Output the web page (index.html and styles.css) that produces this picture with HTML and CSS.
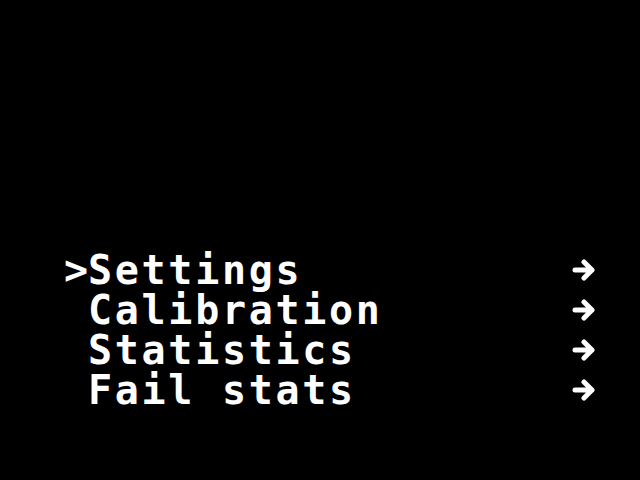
FILE: index.html
```html
<!DOCTYPE html>
<html>
<head>
<meta charset="utf-8">
<link rel="stylesheet" href="styles.css">
</head>
<body>
<div class="screen">
  <ul class="menu">
    <li class="row"><span class="cursor">&gt;</span><span class="label">Settings</span><svg class="arrow" viewBox="0 0 24 22"><path d="M3 11H20M12 3L20 11L12 19"/></svg></li>
    <li class="row"><span class="cursor"></span><span class="label">Calibration</span><svg class="arrow" viewBox="0 0 24 22"><path d="M3 11H20M12 3L20 11L12 19"/></svg></li>
    <li class="row"><span class="cursor"></span><span class="label">Statistics</span><svg class="arrow" viewBox="0 0 24 22"><path d="M3 11H20M12 3L20 11L12 19"/></svg></li>
    <li class="row"><span class="cursor"></span><span class="label">Fail stats</span><svg class="arrow" viewBox="0 0 24 22"><path d="M3 11H20M12 3L20 11L12 19"/></svg></li>
  </ul>
</div>
</body>
</html>
```
FILE: styles.css
```css
html, body {
  margin: 0;
  padding: 0;
  background: #000;
}
.screen {
  width: 640px;
  height: 480px;
  background: #000;
  color: #fff;
  box-sizing: border-box;
  padding: 250px 44px 0 64px;
}
.menu {
  list-style: none;
  margin: 0;
  padding: 0;
  display: flex;
  flex-direction: column;
}
.row {
  display: flex;
  align-items: center;
  height: 40px;
  font-family: "DejaVu Sans Mono", monospace;
  font-weight: bold;
  font-size: 40px;
  letter-spacing: 2.7px;
  line-height: 40px;
}
.cursor {
  width: 24px;
  flex: none;
}
.label {
  flex: 1;
}
.arrow {
  width: 24px;
  height: 22px;
  flex: none;
  fill: none;
  stroke: #fff;
  stroke-width: 5;
  stroke-linecap: round;
  stroke-linejoin: round;
}
```
